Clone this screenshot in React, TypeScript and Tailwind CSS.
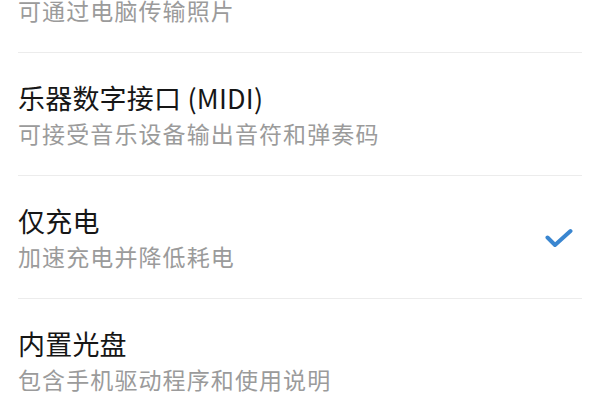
import { useState } from "react";

type UsbMode = {
    id: string;
    title: string;
    desc: string;
};

const modes: UsbMode[] = [
    { id: "ptp", title: "传输照片 (PTP)", desc: "可通过电脑传输照片" },
    { id: "midi", title: "乐器数字接口 (MIDI)", desc: "可接受音乐设备输出音符和弹奏码" },
    { id: "charge", title: "仅充电", desc: "加速充电并降低耗电" },
    { id: "cdrom", title: "内置光盘", desc: "包含手机驱动程序和使用说明" },
];

function CheckIcon() {
    return (
        <svg width="28" height="22" viewBox="0 0 28 22" fill="none">
            <path
                d="M2.5 9.5 L10 17 L25.5 3"
                stroke="#3a86d0"
                strokeWidth="4"
                strokeLinecap="round"
                strokeLinejoin="round"
            />
        </svg>
    );
}

export default function App() {
    const [selected, setSelected] = useState("charge");

    return (
        <div
            className="h-[408px] w-[600px] overflow-hidden bg-white"
            style={{ fontFamily: '"Noto Sans CJK SC", "Noto Sans", sans-serif' }}
        >
            <ul className="-mt-[70px] flex flex-col">
                {modes.map((m) => (
                    <li
                        key={m.id}
                        onClick={() => setSelected(m.id)}
                        className="mx-[18px] flex cursor-pointer items-center border-b border-[#ececec] pt-[28px] pb-[24px] pr-[9px]"
                    >
                        <div className="flex min-w-0 flex-1 flex-col">
                            <span className="text-[27px] leading-[34px] tracking-[0.2px] text-[#161616]">
                                {m.title}
                            </span>
                            <span className="text-[23px] leading-[36px] tracking-[1.1px] text-[#9b9b9b]">
                                {m.desc}
                            </span>
                        </div>
                        {selected === m.id && <CheckIcon />}
                    </li>
                ))}
            </ul>
        </div>
    );
}
